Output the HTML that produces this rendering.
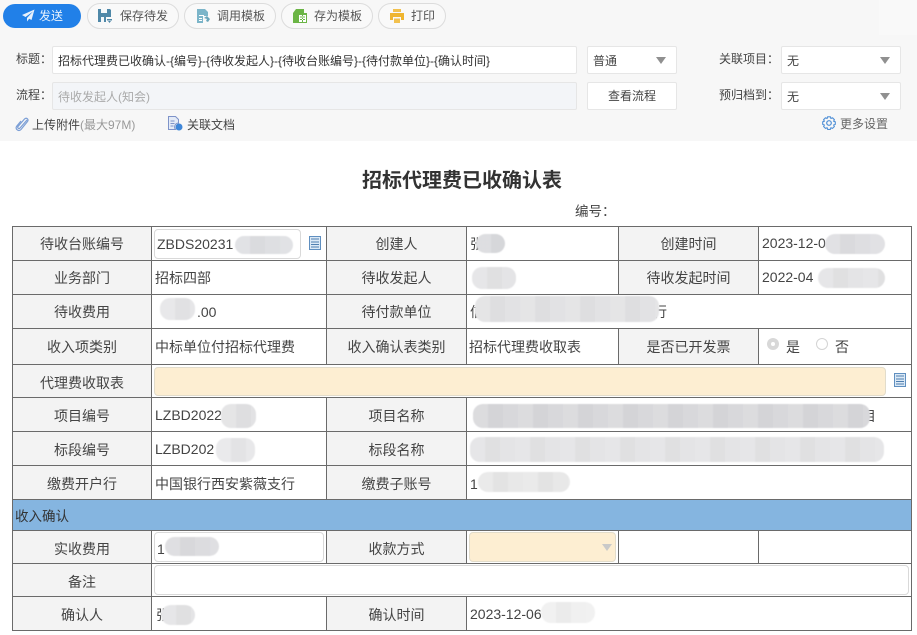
<!DOCTYPE html>
<html><head><meta charset="utf-8">
<style>
html,body{margin:0;padding:0;background:#fff}
body{width:917px;height:635px;position:relative;overflow:hidden;font-family:"Liberation Sans","Noto Sans CJK SC",sans-serif;color:#333}
div,span,svg{position:absolute;box-sizing:border-box}
.t{white-space:nowrap;line-height:18px;height:18px}
.b{height:26px;top:3px;background:#f9f9f9;border:1px solid #dcdcdc;border-radius:13px}
.bt{font-size:12px;color:#555;top:7px}
.i{background:#fff;border:1px solid #e6e6e6;border-radius:2px;height:28px}
.tri{width:0;height:0;border-left:5.5px solid transparent;border-right:5.5px solid transparent;border-top:7px solid #909090}
.s{font-size:12px;color:#444}
.l{background:#f3f3f3}
.c{font-size:14px;color:#444;text-align:center;white-space:nowrap;line-height:18px;height:18px}
.val{font-size:14px;color:#444;white-space:nowrap;line-height:18px;height:18px}
.hl{left:12px;width:900px;height:1px;background:#6a6a6a}
.vl{width:1px;background:#6a6a6a}
.f{border:1px solid #d9d9d9;border-radius:4px;background:#fff}
.y{background:#fdeed2;border-color:#e2dccb}
.m{border-radius:10px;filter:blur(.6px);background-image:repeating-linear-gradient(90deg,rgba(255,255,255,.1) 0 15px,rgba(0,0,0,.02) 15px 30px,rgba(255,255,255,0) 30px 45px)}
</style></head><body>
<div style="left:0;top:0;width:917px;height:141px;background:#f7f7f7"></div>
<div style="left:879px;top:0;width:38px;height:35px;background:#f9f9f9"></div>

<div style="left:3px;top:4px;width:78px;height:24px;background:#2180e8;border-radius:12px"></div>
<svg style="left:22px;top:9px" width="13" height="13" viewBox="0 0 13 13"><path d="M12.5.5 0 6l3.500 2L11 2.500 5 9v3.500l2.200-2.700 2.300 1.200z" fill="#e8f1fb"/></svg>
<div class="t" style="left:39px;top:7px;font-size:12px;color:#e8f2fd">发送</div>

<div class="b" style="left:87px;width:92px"></div>
<svg style="left:98px;top:9px" width="14" height="14" viewBox="0 0 14 14"><path d="M0 0h12l1 1v7H8v5H0z" fill="#4f88a8"/><path d="M3 0h6v4H3zM3 8h3v5H3z" fill="#f5f8fa"/><path d="M9 10h5v1.500H9z" fill="#4f88a8"/><path d="M10 12h3l-1.500 2z" fill="#4f88a8"/></svg>
<div class="t bt" style="left:120px">保存待发</div>

<div class="b" style="left:184px;width:92px"></div>
<svg style="left:197px;top:9px" width="14" height="14" viewBox="0 0 14 14"><path d="M0 0h8l3 3v4H6v7H0z" fill="#7cb5c9"/><path d="M2 6h5v1H2zM2 9h3v1H2zM2 11h3v1H2z" fill="#fff"/><path d="M7 9l3-2 3 3-2 3-2-1 1-2z" fill="#6aa6bb"/></svg>
<div class="t bt" style="left:217px">调用模板</div>

<div class="b" style="left:281px;width:92px"></div>
<svg style="left:293px;top:9px" width="14" height="14" viewBox="0 0 14 14"><path d="M3 0h8v4h3v10H0V4z" fill="#6bb545"/><path d="M6 6h7v7H6z" fill="#fff"/><path d="M7 7.500h5v1H7zM7 10h5v1H7zM9 6v7h1V6z" fill="#6bb545"/></svg>
<div class="t bt" style="left:314px">存为模板</div>

<div class="b" style="left:378px;width:68px"></div>
<svg style="left:390px;top:9px" width="14" height="14" viewBox="0 0 14 14"><path d="M3 0h8v3H3z" fill="#f2c14e"/><path d="M0 4h14v7h-3V8H3v3H0z" fill="#efb52f"/><path d="M4 9.500h6V14H4z" fill="#f2c14e"/></svg>
<div class="t bt" style="left:411px">打印</div>

<div class="t s" style="left:16px;top:50px">标题：</div>
<div class="i" style="left:52px;top:46px;width:525px"></div>
<div class="t s" style="left:58px;top:52px;color:#333">招标代理费已收确认-{编号}-{待收发起人}-{待收台账编号}-{待付款单位}-{确认时间}</div>
<div class="t s" style="left:16px;top:86px">流程：</div>
<div class="i" style="left:52px;top:82px;width:525px;background:#f3f5f8"></div>
<div class="t s" style="left:58px;top:88px;color:#aaa">待收发起人(知会)</div>

<div class="i" style="left:587px;top:46px;width:90px"></div>
<div class="t s" style="left:593px;top:52px">普通</div>
<div class="tri" style="left:656px;top:57px"></div>
<div class="i" style="left:587px;top:82px;width:90px"></div>
<div class="t s" style="left:608px;top:87px">查看流程</div>

<div class="t s" style="left:719px;top:50px">关联项目：</div>
<div class="i" style="left:781px;top:46px;width:120px"></div>
<div class="t s" style="left:787px;top:52px">无</div>
<div class="tri" style="left:880px;top:57px"></div>
<div class="t s" style="left:719px;top:86px">预归档到：</div>
<div class="i" style="left:781px;top:82px;width:120px"></div>
<div class="t s" style="left:787px;top:88px">无</div>
<div class="tri" style="left:880px;top:93px"></div>

<svg style="left:15px;top:117px" width="14" height="15" viewBox="0 0 14 15" fill="none"><path d="M12 3 5 11c-1 1.300-3 0-2-1.500L9.500 2c2-2 4.500.5 3 2.500L6 12.500c-2 2.300-6 0-4.500-3L6 4" stroke="#7c9fd6" stroke-width="1.200"/></svg>
<div class="t s" style="left:32px;top:116px">上传附件<span style="position:static;color:#999">(最大97M)</span></div>
<svg style="left:168px;top:116px" width="15" height="15" viewBox="0 0 15 15"><path d="M.5.500h7l3 3V7a4 4 0 0 0-3 6.500h-7z" fill="#e4ebf7" stroke="#7e93c9"/><path d="M2.500 4.500h4v1h-4zM2.500 7h4v1h-4zM2.500 9.500h3v1h-3z" fill="#7e93c9"/><circle cx="11" cy="11" r="3.500" fill="#3e86d8"/></svg>
<div class="t s" style="left:187px;top:116px">关联文档</div>
<svg style="left:822px;top:116px" width="14" height="14" viewBox="0 0 14 14" fill="none"><path d="M5.600.8h2.800l.5 1.700 1.600-.7 1.900 1.900-.8 1.500 1.700.6v2.600l-1.700.6.800 1.500-1.900 1.900-1.600-.7-.5 1.700H5.600l-.5-1.700-1.600.7-1.900-1.900.8-1.500-1.700-.6V5.800l1.700-.6-.8-1.500 1.900-1.900 1.600.7z" stroke="#4f8fd6" stroke-width="1.100" stroke-linejoin="round"/><circle cx="7" cy="7" r="2.300" stroke="#4f8fd6" stroke-width="1.200"/></svg>
<div class="t s" style="left:840px;top:115px;color:#666">更多设置</div>

<div class="t" style="left:362px;top:170px;height:22px;line-height:22px;font-size:20px;font-weight:bold;color:#333">招标代理费已收确认表</div>
<div class="t" style="left:575px;top:203px;font-size:13.500px;color:#444">编号：</div>

<!-- label backgrounds -->
<div class="l" style="left:13px;top:227px;width:138px;height:403px"></div>
<div class="l" style="left:327px;top:227px;width:139px;height:137px"></div>
<div class="l" style="left:327px;top:398px;width:139px;height:101px"></div>
<div class="l" style="left:327px;top:531px;width:139px;height:32px"></div>
<div class="l" style="left:327px;top:597px;width:139px;height:33px"></div>
<div class="l" style="left:619px;top:227px;width:139px;height:67px"></div>
<div class="l" style="left:619px;top:329px;width:139px;height:35px"></div>
<div style="left:13px;top:499px;width:899px;height:31px;background:#85b5e0"></div>

<!-- grid -->
<div class="hl" style="top:226px"></div><div class="hl" style="top:260px"></div><div class="hl" style="top:294px"></div><div class="hl" style="top:328px"></div><div class="hl" style="top:364px"></div><div class="hl" style="top:397px"></div><div class="hl" style="top:431px"></div><div class="hl" style="top:465px"></div><div class="hl" style="top:499px"></div><div class="hl" style="top:530px"></div><div class="hl" style="top:563px"></div><div class="hl" style="top:596px"></div><div class="hl" style="top:630px"></div>
<div class="vl" style="left:12px;top:226px;height:405px"></div>
<div class="vl" style="left:911px;top:226px;height:405px"></div>
<div class="vl" style="left:151px;top:226px;height:273px"></div>
<div class="vl" style="left:151px;top:530px;height:100px"></div>
<div class="vl" style="left:326px;top:226px;height:138px"></div>
<div class="vl" style="left:326px;top:397px;height:102px"></div>
<div class="vl" style="left:326px;top:530px;height:33px"></div>
<div class="vl" style="left:326px;top:596px;height:34px"></div>
<div class="vl" style="left:466px;top:226px;height:138px"></div>
<div class="vl" style="left:466px;top:397px;height:102px"></div>
<div class="vl" style="left:466px;top:530px;height:33px"></div>
<div class="vl" style="left:466px;top:596px;height:34px"></div>
<div class="vl" style="left:618px;top:226px;height:68px"></div>
<div class="vl" style="left:618px;top:328px;height:36px"></div>
<div class="vl" style="left:618px;top:530px;height:33px"></div>
<div class="vl" style="left:758px;top:226px;height:68px"></div>
<div class="vl" style="left:758px;top:328px;height:36px"></div>
<div class="vl" style="left:758px;top:530px;height:33px"></div>

<!-- left labels -->
<div class="c" style="left:13px;width:138px;top:235px">待收台账编号</div>
<div class="c" style="left:13px;width:138px;top:269px">业务部门</div>
<div class="c" style="left:13px;width:138px;top:303px">待收费用</div>
<div class="c" style="left:13px;width:138px;top:338px">收入项类别</div>
<div class="c" style="left:13px;width:138px;top:374px">代理费收取表</div>
<div class="c" style="left:13px;width:138px;top:407px">项目编号</div>
<div class="c" style="left:13px;width:138px;top:441px">标段编号</div>
<div class="c" style="left:13px;width:138px;top:475px">缴费开户行</div>
<div class="c" style="left:13px;width:138px;top:540px">实收费用</div>
<div class="c" style="left:13px;width:138px;top:573px">备注</div>
<div class="c" style="left:13px;width:138px;top:606px">确认人</div>
<!-- mid labels -->
<div class="c" style="left:327px;width:139px;top:235px">创建人</div>
<div class="c" style="left:327px;width:139px;top:269px">待收发起人</div>
<div class="c" style="left:327px;width:139px;top:303px">待付款单位</div>
<div class="c" style="left:327px;width:139px;top:338px">收入确认表类别</div>
<div class="c" style="left:327px;width:139px;top:407px">项目名称</div>
<div class="c" style="left:327px;width:139px;top:441px">标段名称</div>
<div class="c" style="left:327px;width:139px;top:475px">缴费子账号</div>
<div class="c" style="left:327px;width:139px;top:540px">收款方式</div>
<div class="c" style="left:327px;width:139px;top:606px">确认时间</div>
<!-- right labels -->
<div class="c" style="left:619px;width:139px;top:235px">创建时间</div>
<div class="c" style="left:619px;width:139px;top:269px">待收发起时间</div>
<div class="c" style="left:619px;width:139px;top:338px">是否已开发票</div>

<!-- fields -->
<div class="f" style="left:154px;top:229px;width:147px;height:30px"></div>
<div class="val" style="left:157px;top:235px">ZBDS20231</div>
<div class="m" style="left:235px;top:236px;width:58px;height:18px;background-color:#dedfe2"></div>
<svg style="left:309px;top:236px" width="12" height="14" viewBox="0 0 12 14"><rect x=".5" y=".5" width="11" height="13" fill="#dbe9f6" stroke="#5f8fc0"/><path d="M2 3h8M2 6h8M2 8.500h8M2 11h8" stroke="#4f7fb0"/></svg>
<div class="f y" style="left:154px;top:367px;width:732px;height:29px"></div>
<svg style="left:894px;top:373px" width="12" height="14" viewBox="0 0 12 14"><rect x=".5" y=".5" width="11" height="13" fill="#dbe9f6" stroke="#5f8fc0"/><path d="M2 3h8M2 6h8M2 8.500h8M2 11h8" stroke="#4f7fb0"/></svg>
<div class="f" style="left:154px;top:532px;width:170px;height:30px"></div>
<div class="f y" style="left:469px;top:532px;width:147px;height:30px"></div>
<div class="tri" style="left:602px;top:544px;border-top-color:#c9c9c9;border-left-width:5px;border-right-width:5px"></div>
<div class="f" style="left:154px;top:565px;width:755px;height:30px"></div>
<div class="val" style="left:157px;top:540px">1</div>
<div class="m" style="left:165px;top:537px;width:54px;height:19px;background-color:#dcdcdf"></div>

<!-- values -->
<div class="val" style="left:155px;top:269px">招标四部</div>
<div class="val" style="left:197px;top:303px">.00</div>
<div class="m" style="left:160px;top:298px;width:35px;height:22px;background-color:#e6e6e8"></div>
<div class="val" style="left:155px;top:338px">中标单位付招标代理费</div>
<div class="val" style="left:155px;top:406px">LZBD2022</div>
<div class="m" style="left:221px;top:404px;width:35px;height:24px;background-color:#e2e2e4"></div>
<div class="val" style="left:155px;top:440px">LZBD202</div>
<div class="m" style="left:216px;top:438px;width:39px;height:24px;background-color:#e8e8ea"></div>
<div class="val" style="left:155px;top:475px">中国银行西安紫薇支行</div>

<div class="val" style="left:470px;top:235px">张</div>
<div class="m" style="left:476px;top:234px;width:29px;height:19px;background-color:#dadbde"></div>
<div class="m" style="left:472px;top:267px;width:44px;height:22px;background-color:#e4e4e6"></div>
<div class="val" style="left:470px;top:303px">信</div>
<div class="val" style="left:653px;top:303px">行</div>
<div class="m" style="left:475px;top:296px;width:184px;height:26px;background-color:#e2e2e4"></div>
<div class="val" style="left:469px;top:338px">招标代理费收取表</div>
<div class="val" style="left:862px;top:407px">目</div>
<div class="m" style="left:473px;top:404px;width:397px;height:24px;background-color:#d8d8db"></div>
<div class="m" style="left:470px;top:437px;width:414px;height:25px;background-color:#e4e4e6"></div>
<div class="val" style="left:470px;top:475px">1</div>
<div class="m" style="left:478px;top:472px;width:92px;height:20px;background-color:#e8e8e8"></div>
<div class="val" style="left:156px;top:606px">张</div>
<div class="m" style="left:161px;top:605px;width:34px;height:20px;background-color:#e4e4e6"></div>
<div class="val" style="left:470px;top:605px">2023-12-06</div>
<div class="m" style="left:541px;top:602px;width:54px;height:21px;background-color:#f0f0f0"></div>

<div class="val" style="left:762px;top:234px">2023-12-0</div>
<div class="m" style="left:825px;top:234px;width:60px;height:20px;background-color:#dedee1"></div>
<div class="val" style="left:762px;top:268px">2022-04</div>
<div class="m" style="left:818px;top:268px;width:67px;height:20px;background-color:#e4e4e6"></div>

<div style="left:767px;top:338px;width:12px;height:12px;border-radius:50%;background:#d8d8d8"></div>
<div style="left:771px;top:342px;width:4px;height:4px;border-radius:50%;background:#fff"></div>
<div class="val" style="left:786px;top:338px">是</div>
<div style="left:816px;top:338px;width:12px;height:12px;border-radius:50%;border:1px solid #d4d4d4;background:#fff"></div>
<div class="val" style="left:835px;top:338px">否</div>

<div class="val" style="left:15px;top:508px;color:#333;font-size:13.500px">收入确认</div>
</body></html>
